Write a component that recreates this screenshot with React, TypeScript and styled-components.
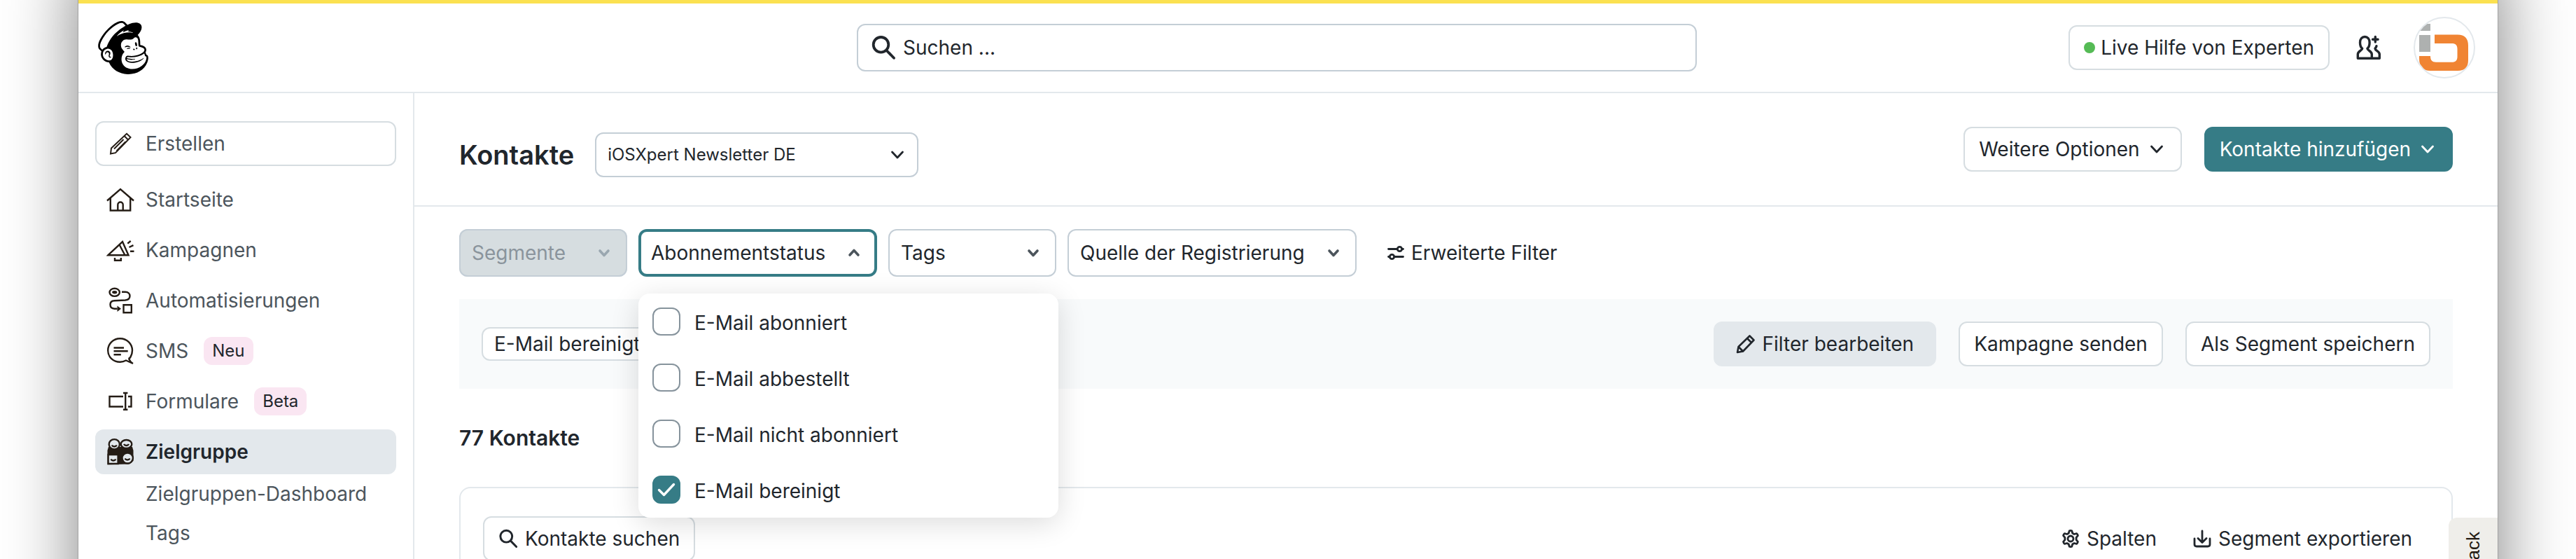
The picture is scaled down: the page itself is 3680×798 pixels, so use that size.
import React, { useState } from 'react';
import styled, { createGlobalStyle } from 'styled-components';
import { SiMailchimp } from 'react-icons/si';

const color = {
  ink: '#21262c',
  muted: '#4c555c',
  teal: '#367c86',
  line: '#e3e8ec',
  buttonLine: '#d6dde1',
  fieldLine: '#c4ced6',
  fill: '#e3e8ec',
  panel: '#f8fafb',
  icon: '#241c15',
};

const GlobalStyle = createGlobalStyle`
  *, *::before, *::after { box-sizing: border-box; }
  body {
    margin: 0;
    background: #fff;
    color: ${color.ink};
    font-family: Inter, "Liberation Sans", sans-serif;
    font-size: 28px;
    line-height: 40px;
  }
  button, input, select { font: inherit; color: inherit; margin: 0; }
  h1, h2, ul { margin: 0; padding: 0; }
  svg { display: block; flex: none; }
`;

const Desktop = styled.div`
  isolation: isolate;
  height: 100vh;
  overflow: hidden;
  padding: 0 112px;
  background: #fff;
`;

const Window = styled.div`
  position: relative;
  display: flex;
  flex-direction: column;
  height: 100%;
  background: #fff;
  border-top: 5px solid #fbe150;
  &::before {
    content: '';
    position: absolute;
    z-index: -1;
    inset: -100px 0 -200px;
    background: #fff;
    box-shadow: 0 0 0 1px #a2a2a2, 0 40px 96px rgba(0, 0, 0, 0.5);
  }
`;

const TopBar = styled.header`
  display: grid;
  grid-template-columns: 1fr 1200px 1fr;
  align-items: center;
  gap: 32px;
  height: 128px;
  flex: none;
  padding-right: 32px;
  background: #fff;
  border-bottom: 2px solid ${color.line};
`;

const LogoLink = styled.a`
  justify-self: start;
  margin-left: 26px;
  color: #000;
`;

const SearchField = styled.label`
  display: flex;
  align-items: center;
  gap: 10px;
  height: 68px;
  padding: 0 18px;
  border: 2px solid ${color.fieldLine};
  border-radius: 12px;
`;

const SearchInput = styled.input`
  flex: 1;
  min-width: 0;
  padding: 0;
  border: 0;
  outline: 0;
  background: none;
  &::placeholder { color: ${color.ink}; opacity: 1; }
`;

const TopActions = styled.div`
  display: flex;
  align-items: center;
  justify-content: flex-end;
`;

type Tone = 'outline' | 'filled' | 'primary' | 'plain';

const tones: Record<Tone, string> = {
  outline: `background: #fff; border-color: ${color.buttonLine};`,
  filled: `background: ${color.fill}; border-color: ${color.fill}; padding: 0 30px;`,
  primary: `background: ${color.teal}; border-color: ${color.teal}; color: #fff;`,
  plain: 'background: none; border-color: transparent; padding: 0;',
};

const Button = styled.button<{ $tone?: Tone; $gap?: number }>`
  display: inline-flex;
  align-items: center;
  gap: ${(p) => p.$gap ?? 10}px;
  flex: none;
  height: 64px;
  padding: 0 20px;
  border: 2px solid;
  border-radius: 12px;
  white-space: nowrap;
  cursor: pointer;
  ${(p) => tones[p.$tone ?? 'outline']}
`;

const OnlineDot = styled.span`
  width: 16px;
  height: 16px;
  border-radius: 50%;
  background: #55bb55;
`;

const IconButton = styled.button`
  display: flex;
  padding: 0 46px 0 38px;
  border: 0;
  background: none;
  cursor: pointer;
`;

const Avatar = styled.a`
  display: block;
  overflow: hidden;
  width: 88px;
  height: 88px;
  border: 2px solid ${color.line};
  border-radius: 50%;
`;

const Body = styled.div`
  display: flex;
  flex: 1;
  min-height: 0;
`;

const Sidebar = styled.nav`
  flex: none;
  width: 480px;
  padding: 40px 24px;
  border-right: 2px solid ${color.line};
`;

const CreateButton = styled.button`
  display: flex;
  align-items: center;
  gap: 16px;
  width: 100%;
  height: 64px;
  margin-bottom: 16px;
  padding: 0 14px;
  border: 2px solid ${color.buttonLine};
  border-radius: 12px;
  background: #fff;
  color: ${color.muted};
  cursor: pointer;
`;

const NavList = styled.ul`
  display: flex;
  flex-direction: column;
  gap: 8px;
  list-style: none;
`;

const NavLink = styled.a<{ $active?: boolean }>`
  display: flex;
  align-items: center;
  gap: 16px;
  height: 64px;
  padding: 0 16px;
  border-radius: 12px;
  text-decoration: none;
  color: ${(p) => (p.$active ? color.ink : color.muted)};
  font-weight: ${(p) => (p.$active ? 600 : 400)};
  background: ${(p) => (p.$active ? color.fill : 'none')};
`;

const Tag = styled.span`
  margin-left: 6px;
  padding: 0 12px;
  border-radius: 12px;
  background: #fae6f2;
  color: ${color.ink};
  font-size: 24px;
`;

const SubLink = styled.a`
  display: flex;
  align-items: center;
  height: 56px;
  padding-left: 72px;
  color: ${color.muted};
  text-decoration: none;
`;

const Main = styled.main`
  flex: 1;
  min-width: 0;
`;

const PageHead = styled.div`
  display: flex;
  align-items: flex-start;
  justify-content: space-between;
  padding: 48px 64px;
  border-bottom: 2px solid ${color.line};
`;

const TitleGroup = styled.div`
  display: flex;
  align-items: center;
  gap: 30px;
  padding-top: 8px;
  margin-bottom: -8px;
`;

const Title = styled.h1`
  font-size: 38px;
  line-height: 56px;
  font-weight: 600;
`;

const SelectBox = styled.div`
  display: grid;
  align-items: center;
  width: 462px;
  height: 64px;
  > * { grid-area: 1 / 1; }
  > svg { justify-self: end; margin-right: 16px; pointer-events: none; }
`;

const Select = styled.select`
  appearance: none;
  width: 100%;
  height: 100%;
  padding: 0 60px 0 16px;
  border: 2px solid ${color.fieldLine};
  border-radius: 12px;
  background: #fff;
  font-size: 24px;
`;

const ButtonGroup = styled.div<{ $gap?: number }>`
  display: flex;
  gap: ${(p) => p.$gap ?? 32}px;
`;

const Content = styled.div`
  padding: 32px 64px;
`;

const FilterBar = styled.div`
  display: flex;
  align-items: center;
  gap: 16px;
`;

const FilterSlot = styled.div`
  position: relative;
`;

const FilterButton = styled.button<{ $open?: boolean; $width: number }>`
  display: flex;
  align-items: center;
  justify-content: space-between;
  width: ${(p) => p.$width}px;
  height: 68px;
  padding: 0 24px 0 18px;
  border: 0;
  border-radius: 12px;
  background: #fff;
  box-shadow: inset 0 0 0 ${(p) => (p.$open ? `4px ${color.teal}` : `2px ${color.fieldLine}`)};
  white-space: nowrap;
  cursor: pointer;
  > svg { color: #4c555c; }
  &:disabled {
    background: #d6dde0;
    color: #8a949c;
    cursor: default;
    > svg { color: #9aa7b0; }
  }
`;

const AdvancedButton = styled(Button)`
  margin-left: 26px;
`;

const Menu = styled.div`
  position: absolute;
  z-index: 2;
  top: 92px;
  left: 0;
  width: 600px;
  border-radius: 16px;
  background: #fff;
  box-shadow: 0 8px 40px rgba(0, 0, 0, 0.14);
`;

const Option = styled.label`
  display: flex;
  gap: 20px;
  height: 80px;
  padding: 20px;
  line-height: 44px;
  cursor: pointer;
`;

const CheckBoxFrame = styled.span`
  display: grid;
  place-items: center;
  height: 40px;
  > * { grid-area: 1 / 1; }
  > svg { color: #fff; pointer-events: none; }
`;

const CheckBox = styled.input`
  appearance: none;
  width: 40px;
  height: 40px;
  margin: 0;
  border: 2px solid #86939c;
  border-radius: 12px;
  &:checked { background: ${color.teal}; border-color: ${color.teal}; }
`;

const ActiveFilters = styled.section`
  display: flex;
  align-items: center;
  justify-content: space-between;
  margin-top: 32px;
  padding: 32px;
  background: ${color.panel};
`;

const Chip = styled.span`
  height: 48px;
  padding: 2px 16px;
  border: 2px solid ${color.buttonLine};
  border-radius: 12px;
  background: #fff;
`;

const CountHeading = styled.h2`
  margin: 48px 0;
  font-size: 30px;
  line-height: 44px;
  font-weight: 600;
`;

const Card = styled.section`
  display: flex;
  justify-content: space-between;
  min-height: 400px;
  padding: 40px 54px 40px 32px;
  border: 2px solid ${color.line};
  border-radius: 16px;
`;

const Feedback = styled.button`
  position: absolute;
  top: 734px;
  right: 0;
  width: 70px;
  padding: 20px 0;
  border: 0;
  border-radius: 12px 0 0 12px;
  background: #efeeea;
  color: ${color.icon};
  cursor: pointer;
`;

const FeedbackText = styled.span`
  display: block;
  margin: 0 auto;
  writing-mode: vertical-rl;
  transform: rotate(180deg);
  font-family: "Liberation Sans", sans-serif;
  font-size: 26px;
`;

interface SvgProps {
  size: number;
  box: string;
  sw?: number;
  children: React.ReactNode;
}

const Svg = ({ size, box, children, sw = 2.4 }: SvgProps) => (
  <svg
    width={size}
    height={size}
    viewBox={box}
    fill="none"
    stroke="currentColor"
    strokeWidth={sw}
    strokeLinecap="round"
    strokeLinejoin="round"
    aria-hidden="true"
  >
    {children}
  </svg>
);

const Chevron = () => (
  <Svg size={28} box="0 0 28 28" sw={2.8}>
    <path d="M6.500 10l7.500 8 7.500-8" />
  </Svg>
);

const CaretIcon = ({ up }: { up?: boolean }) => (
  <Svg size={18} box="0 0 18 18" sw={3.6}>
    <path d={up ? 'M3 12l6-6.500 6 6.500' : 'M3 6l6 6.500L15 6'} />
  </Svg>
);

const SearchIcon = ({ size }: { size: number }) => (
  <Svg size={size} box="0 0 36 36" sw={3.8}>
    <circle cx="14.500" cy="13.800" r="10.800" />
    <path d="M22.500 22 33 32.800" />
  </Svg>
);

const NavIcon = ({ children }: { children: React.ReactNode }) => (
  <svg width="40" height="40" viewBox="0 0 40 40" fill="none" stroke={color.icon} strokeWidth="2.4" aria-hidden="true">
    {children}
  </svg>
);

const PencilIcon = () => (
  <NavIcon>
    <path d="M6 34.500 7 26.500 29 5.800l5.500 5.200L13 33.200zM25.500 9l5.500 5.500M11 27.500 24.500 14M14.500 30.500 27.500 17.200" strokeWidth="2" />
  </NavIcon>
);

const HomeIcon = () => (
  <NavIcon>
    <path d="M1 21.500 20 5l19 16.500M5.800 18v17.500h28.400V18M16.300 35.500V27.200a3.700 3.700 0 0 1 7.400 0v8.300" />
  </NavIcon>
);

const CampaignIcon = () => (
  <NavIcon>
    <path d="M2.500 27.200 23 8l8.500 19.200zM18.500 12.300l8 14.900M12 31v3.700h8.800V31M30.300 10.700l4.400-3.700M32.500 16l6-2.800M34 21.700h5.500" />
  </NavIcon>
);

const AutomationIcon = () => (
  <NavIcon>
    <ellipse cx="11.700" cy="8.300" rx="7.200" ry="5.600" />
    <ellipse cx="11.700" cy="8.300" rx="2.400" ry="1" />
    <path d="M22 7.800h5c4 0 6.500 2.300 6.500 5.800s-2.700 5.600-6.500 5.900l-15.500.8c-4 .2-6 2.300-6 5.500 0 3.700 2 5.800 6 5.900h4M24.500 26.300h11.300v11H24.500z" />
    <path d="M15.500 27.500v8.500l5.500-4.300z" fill={color.icon} stroke="none" />
  </NavIcon>
);

const SmsIcon = () => (
  <NavIcon>
    <path d="M32 32c3.200-3.500 5-8 5-12.800C37 9.500 29 2.200 19.500 2.200S2.200 9.500 2.200 19.200s7.800 16.500 17.300 16.500c3.300 0 6-.8 8.500-2.200l10 4.500c-2.800-1.500-4.500-3.600-5.800-6.500zM10.500 15.500H25M10.500 20.300h20.200M10.500 25.300h10.300" />
  </NavIcon>
);

const FormIcon = () => (
  <NavIcon>
    <path d="M24 13H4.500v14.500H24M27.200 8v23.800M24 8h6.400M24 31.800h6.400M31 13h4.500v14.500H31" />
  </NavIcon>
);

const AudienceIcon = () => (
  <NavIcon>
    <path d="M3 13h34l1.500 5v15l-6 4.500-31 .8V18z" fill={color.icon} stroke="none" />
    <g fill={color.fill}>
      <ellipse cx="11.300" cy="9.300" rx="7.600" ry="7.200" />
      <ellipse cx="28.500" cy="9" rx="7.800" ry="6" />
      <path d="M2.600 24h14v13h-14z" />
      <ellipse cx="30.200" cy="29" rx="7.700" ry="7.500" />
    </g>
    <path d="M7.800 10.500c1.500 2.600 5.500 2.600 7 0M25 9c1.500 2.600 5.500 2.600 7 0M6.500 30.500c1.200 2.600 5.500 2.600 6.800 0M26.500 29.500c1.500 2.600 5.500 2.600 7 0" />
  </NavIcon>
);

const PeopleIcon = () => (
  <Svg size={36} box="0 0 36 36" sw={3.4}>
    <path d="M8.700 19.300C6.200 17.300 5.500 14.500 5.500 10.700 5.500 5.200 8.500 2.500 12.300 2.500s6.800 2.700 6.800 8.200c0 3.800-.7 6.600-3.200 8.600 0 3 6.400 3.200 6.400 8.200v5.700h-20v-5.700c0-5 6.400-5.200 6.400-8.200zM22.300 33.200h11v-5.700c0-4.500-6.300-5-6.300-8.300 1-1 1.700-2 2-3.500M27.300 2.500v7.600M23.500 6.300h7.600" />
  </Svg>
);

const BrandIcon = () => (
  <svg width="88" height="88" viewBox="2 2 88 88" aria-hidden="true">
    <path d="M8 10h16v10H8zM8 26h16v24H8z" fill="#aeb1b0" />
    <path d="M30 25.500h33C73 25.500 78 31 78 41v21c0 10-5 15-15 15H24C13.500 77 8 71 8 60v-4h16c0 6 2.500 8.700 8 8.700h22.500c5.500 0 8-2.500 8-8V46c0-5.500-2.500-8-8-8H30z" fill="#f08433" />
  </svg>
);

const SlidersIcon = () => (
  <Svg size={24} box="0 0 24 24" sw={2.8}>
    <path d="M1.500 6.500H14M21 6.500h1.500M10 17.500h12.500M1.500 17.500H3" />
    <circle cx="17.500" cy="6.500" r="3.200" />
    <circle cx="6.500" cy="17.500" r="3.200" />
  </Svg>
);

const EditIcon = () => (
  <Svg size={28} box="0 0 28 28" sw={2.6}>
    <path d="M2 26l1.500-8L19.500 2.500l6 6L10 24.500zM16 6l6 6M3.500 18l6.500 6.500" />
  </Svg>
);

const GearIcon = () => (
  <Svg size={26} box="0 0 26 26" sw={2.8}>
    <path d="M11.300 1.800q1.700-.8 3.400 0l1.100 3.400 2.300 1.300 3.500-.8q1.500 1 1.800 2.900l-2.300 2.700v3.400l2.300 2.700q-.3 1.900-1.800 2.900l-3.500-.8-2.300 1.300-1.100 3.400q-1.700.8-3.400 0l-1.100-3.400-2.300-1.300-3.500.8q-1.500-1-1.800-2.900l2.300-2.700v-3.400L2.600 8.600q.3-1.900 1.800-2.900l3.500.8 2.300-1.300z" />
    <circle cx="13" cy="13" r="4" />
  </Svg>
);

const DownloadIcon = () => (
  <Svg size={26} box="0 0 26 26" sw={2.8}>
    <path d="M13 2v16M7 12.500l6 6 6-6M2 13v8q0 3 3 3h16q3 0 3-3v-8" />
  </Svg>
);

const CheckIcon = () => (
  <Svg size={28} box="0 0 28 28" sw={3.4}>
    <path d="M3.500 14.500l7 7L24.500 6.500" />
  </Svg>
);

const navItems = [
  { label: 'Startseite', icon: <HomeIcon /> },
  { label: 'Kampagnen', icon: <CampaignIcon /> },
  { label: 'Automatisierungen', icon: <AutomationIcon /> },
  { label: 'SMS', icon: <SmsIcon />, tag: 'Neu' },
  { label: 'Formulare', icon: <FormIcon />, tag: 'Beta' },
  { label: 'Zielgruppe', icon: <AudienceIcon />, active: true },
];

const statusOptions = ['E-Mail abonniert', 'E-Mail abbestellt', 'E-Mail nicht abonniert', 'E-Mail bereinigt'];

export default function App() {
  const [open, setOpen] = useState(true);
  const [selected, setSelected] = useState<string[]>(['E-Mail bereinigt']);

  const toggle = (name: string) =>
    setSelected((s) => (s.includes(name) ? s.filter((n) => n !== name) : [...s, name]));

  return (
    <>
      <GlobalStyle />
      <Desktop>
        <Window>
          <TopBar>
            <LogoLink href="#" aria-label="Mailchimp"><SiMailchimp size={76} /></LogoLink>
            <SearchField>
              <SearchIcon size={36} />
              <SearchInput type="text" placeholder="Suchen ..." aria-label="Suchen" />
            </SearchField>
            <TopActions>
              <Button $gap={8}><OnlineDot />Live Hilfe von Experten</Button>
              <IconButton aria-label="Benutzer einladen"><PeopleIcon /></IconButton>
              <Avatar href="#" aria-label="Konto"><BrandIcon /></Avatar>
            </TopActions>
          </TopBar>
          <Body>
            <Sidebar>
              <CreateButton><PencilIcon />Erstellen</CreateButton>
              <NavList>
                {navItems.map((item) => (
                  <li key={item.label}>
                    <NavLink href="#" $active={item.active}>
                      {item.icon}
                      {item.label}
                      {item.tag && <Tag>{item.tag}</Tag>}
                    </NavLink>
                  </li>
                ))}
              </NavList>
              <SubLink href="#">Zielgruppen-Dashboard</SubLink>
              <SubLink href="#">Tags</SubLink>
            </Sidebar>
            <Main>
              <PageHead>
                <TitleGroup>
                  <Title>Kontakte</Title>
                  <SelectBox>
                    <Select aria-label="Zielgruppe"><option>iOSXpert Newsletter DE</option></Select>
                    <Chevron />
                  </SelectBox>
                </TitleGroup>
                <ButtonGroup>
                  <Button>Weitere Optionen<Chevron /></Button>
                  <Button $tone="primary">Kontakte hinzufügen<Chevron /></Button>
                </ButtonGroup>
              </PageHead>
              <Content>
                <FilterBar>
                  <FilterButton $width={240} disabled>Segmente<CaretIcon /></FilterButton>
                  <FilterSlot>
                    <FilterButton $width={341} $open={open} aria-expanded={open} onClick={() => setOpen(!open)}>
                      Abonnementstatus<CaretIcon up={open} />
                    </FilterButton>
                    {open && (
                      <Menu>
                        {statusOptions.map((name) => (
                          <Option key={name}>
                            <CheckBoxFrame>
                              <CheckBox type="checkbox" checked={selected.includes(name)} onChange={() => toggle(name)} />
                              {selected.includes(name) && <CheckIcon />}
                            </CheckBoxFrame>
                            {name}
                          </Option>
                        ))}
                      </Menu>
                    )}
                  </FilterSlot>
                  <FilterButton $width={240}>Tags<CaretIcon /></FilterButton>
                  <FilterButton $width={413}>Quelle der Registrierung<CaretIcon /></FilterButton>
                  <AdvancedButton $tone="plain"><SlidersIcon />Erweiterte Filter</AdvancedButton>
                </FilterBar>
                <ActiveFilters>
                  <Chip>E-Mail bereinigt</Chip>
                  <ButtonGroup>
                    <Button $tone="filled"><EditIcon />Filter bearbeiten</Button>
                    <Button>Kampagne senden</Button>
                    <Button>Als Segment speichern</Button>
                  </ButtonGroup>
                </ActiveFilters>
                <CountHeading>77 Kontakte</CountHeading>
                <Card>
                  <Button><SearchIcon size={28} />Kontakte suchen</Button>
                  <ButtonGroup $gap={48}>
                    <Button $tone="plain"><GearIcon />Spalten</Button>
                    <Button $tone="plain"><DownloadIcon />Segment exportieren</Button>
                  </ButtonGroup>
                </Card>
              </Content>
            </Main>
          </Body>
          <Feedback><FeedbackText>Feedback</FeedbackText></Feedback>
        </Window>
      </Desktop>
    </>
  );
}
